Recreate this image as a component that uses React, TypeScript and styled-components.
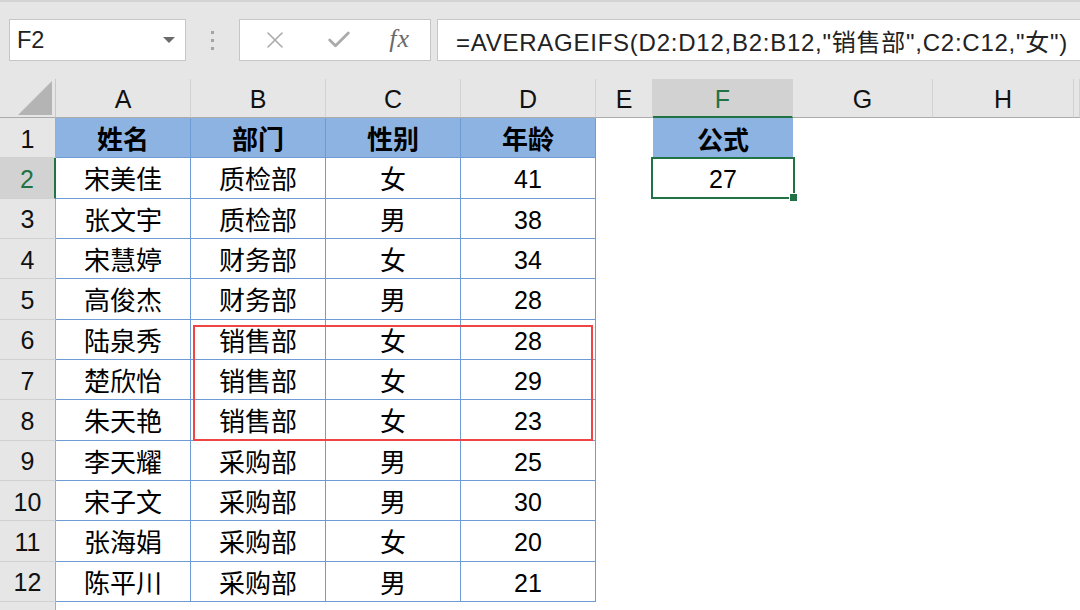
import React from 'react';
import styled, { createGlobalStyle, css } from 'styled-components';
import { X, Check } from 'lucide-react';

type Row = [string, string, string, number];

const rows: Row[] = [
  ['宋美佳', '质检部', '女', 41],
  ['张文宇', '质检部', '男', 38],
  ['宋慧婷', '财务部', '女', 34],
  ['高俊杰', '财务部', '男', 28],
  ['陆泉秀', '销售部', '女', 28],
  ['楚欣怡', '销售部', '女', 29],
  ['朱天艳', '销售部', '女', 23],
  ['李天耀', '采购部', '男', 25],
  ['宋子文', '采购部', '男', 30],
  ['张海娟', '采购部', '女', 20],
  ['陈平川', '采购部', '男', 21],
];

const columns = ['A', 'B', 'C', 'D', 'E', 'F', 'G', 'H', ''];

const GlobalStyle = createGlobalStyle`
  html, body {
    margin: 0;
    padding: 0;
    background: #ffffff;
    overflow: hidden;
  }
  body {
    font-family: "Liberation Sans", Arial, "Noto Sans CJK SC", sans-serif;
  }
`;

const Page = styled.div`
  width: 1080px;
  height: 610px;
  display: flex;
  flex-direction: column;
  overflow: hidden;
`;

const FormulaBar = styled.div`
  height: 79px;
  flex-shrink: 0;
  box-sizing: border-box;
  background: #e6e6e6;
  border-top: 2px solid #d4d4d4;
  padding: 17px 0 0 9px;
  display: flex;
  align-items: flex-start;
`;

const Box = styled.div`
  height: 42px;
  box-sizing: border-box;
  background: #ffffff;
  border: 1px solid #c6c6c6;
  display: flex;
  align-items: center;
`;

const NameBox = styled(Box)`
  width: 177px;
  padding: 0 10px 0 7px;
  justify-content: space-between;
  font-size: 23.5px;
  color: #222;
`;

const DropArrow = styled.span`
  width: 0;
  height: 0;
  border-left: 6px solid transparent;
  border-right: 6px solid transparent;
  border-top: 6px solid #6b6b6b;
`;

const Grip = styled.div`
  width: 53px;
  height: 42px;
  display: flex;
  flex-direction: column;
  align-items: center;
  justify-content: center;
  gap: 5px;
`;

const Dot = styled.span`
  width: 3px;
  height: 3px;
  background: #a4a4a4;
`;

const ButtonsBox = styled(Box)`
  width: 192px;
  padding: 0 20px 0 21px;
  justify-content: space-between;
  color: #ababab;
`;

const Fx = styled.span`
  font-family: "Liberation Serif", "Times New Roman", serif;
  font-style: italic;
  font-size: 26px;
  color: #6a6a6a;
  letter-spacing: 1px;
  margin-top: -3px;
`;

const FormulaInput = styled(Box)`
  flex: 1;
  margin-left: 6px;
  border-right: none;
  padding-left: 18px;
  font-size: 24px;
  letter-spacing: 0.75px;
  color: #222;
  white-space: nowrap;
`;

const Sheet = styled.div`
  flex: 1;
  min-height: 0;
  position: relative;
  display: grid;
  grid-template-columns: 56px 135px 135px 135px 135px 57px 140px 140px 141px 1fr;
  grid-template-rows: 39px repeat(12, 40.33px) 1fr;
  font-size: 24px;
  color: #000;
`;

const Corner = styled.div`
  background: #e6e6e6;
  border-right: 1px solid #c8c8c8;
  border-bottom: 1px solid #ababab;
  position: relative;
  &::after {
    content: '';
    position: absolute;
    right: 3px;
    bottom: 2px;
    width: 0;
    height: 0;
    border-left: 34px solid transparent;
    border-bottom: 34px solid #b4b4b4;
  }
`;

const ColHead = styled.div<{ $active?: boolean }>`
  box-sizing: border-box;
  background: #e6e6e6;
  border-right: 1px solid #d2d2d2;
  border-bottom: 1px solid #ababab;
  display: flex;
  align-items: center;
  justify-content: center;
  padding-top: 3px;
  font-size: 25px;
  color: #111;
  ${(p) =>
    p.$active &&
    css`
      background: #d2d2d2;
      color: #217346;
      border-bottom: 2px solid #217346;
    `}
`;

const RowHead = styled.div<{ $active?: boolean }>`
  box-sizing: border-box;
  background: #e6e6e6;
  border-bottom: 1px solid #d0d0d0;
  border-right: 1px solid #ababab;
  display: flex;
  align-items: center;
  justify-content: center;
  padding-top: 3px;
  font-size: 25px;
  color: #111;
  ${(p) =>
    p.$active &&
    css`
      background: #d2d2d2;
      color: #217346;
      border-right: 2px solid #217346;
    `}
`;

const Cell = styled.div<{ $table?: boolean; $head?: boolean; $cjk?: boolean }>`
  box-sizing: border-box;
  display: flex;
  align-items: center;
  justify-content: center;
  white-space: nowrap;
  padding-top: ${(p) => (p.$cjk ? '0' : '4px')};
  font-size: ${(p) => (p.$cjk ? '26px' : '25px')};
  ${(p) =>
    p.$table &&
    css`
      border-right: 1px solid #6f9bd4;
      border-bottom: 1px solid #6f9bd4;
    `}
  ${(p) =>
    p.$head &&
    css`
      background: #8db3e2;
      font-weight: bold;
    `}
`;

const Selected = styled.div`
  margin: -1px -2px 0 -2px;
  border: 2px solid #217346;
  box-sizing: border-box;
  position: relative;
  display: flex;
  align-items: center;
  justify-content: center;
  padding-top: 4px;
  font-size: 25px;
  &::after {
    content: '';
    position: absolute;
    right: -5px;
    bottom: -5px;
    width: 7px;
    height: 7px;
    background: #217346;
    border: 1px solid #fff;
  }
`;

// red box drawn over B6:D8
const Highlight = styled.div`
  position: absolute;
  grid-column: 3 / 6;
  grid-row: 7 / 10;
  top: 5px;
  left: 2px;
  right: 3px;
  bottom: 0;
  border: 2px solid #f04545;
  pointer-events: none;
`;

const Filler = styled.div`
  background: #e6e6e6;
  border-right: 1px solid #ababab;
`;

export default function App() {
  return (
    <Page>
      <GlobalStyle />
      <FormulaBar>
        <NameBox>
          <span>F2</span>
          <DropArrow />
        </NameBox>
        <Grip>
          <Dot />
          <Dot />
          <Dot />
        </Grip>
        <ButtonsBox>
          <X size={28} strokeWidth={1.4} />
          <Check size={28} strokeWidth={2.4} />
          <Fx>fx</Fx>
        </ButtonsBox>
        <FormulaInput>=AVERAGEIFS(D2:D12,B2:B12,"销售部",C2:C12,"女")</FormulaInput>
      </FormulaBar>
      <Sheet>
        <Corner />
        {columns.map((c, i) => (
          <ColHead key={i} $active={c === 'F'}>
            {c}
          </ColHead>
        ))}

        <RowHead>1</RowHead>
        {['姓名', '部门', '性别', '年龄'].map((h) => (
          <Cell key={h} $table $head $cjk>
            {h}
          </Cell>
        ))}
        <Cell />
        <Cell $head $cjk>
          公式
        </Cell>
        <Cell />
        <Cell />
        <Cell />

        {rows.map((r, i) => (
          <React.Fragment key={i}>
            <RowHead $active={i === 0}>{i + 2}</RowHead>
            {r.map((v, j) => (
              <Cell key={j} $table $cjk={typeof v === 'string'}>
                {v}
              </Cell>
            ))}
            <Cell />
            {i === 0 ? <Selected>27</Selected> : <Cell />}
            <Cell />
            <Cell />
            <Cell />
          </React.Fragment>
        ))}
        <Filler />
        <Highlight />
      </Sheet>
    </Page>
  );
}
